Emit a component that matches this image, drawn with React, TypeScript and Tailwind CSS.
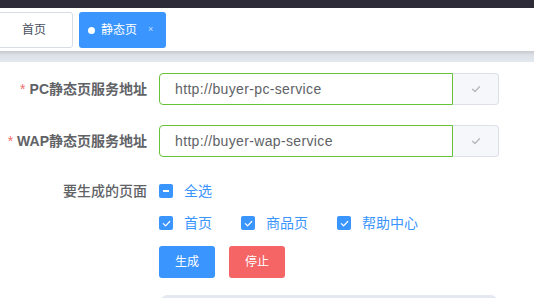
import React from "react";

const font = { fontFamily: '"Liberation Sans", "Noto Sans CJK SC", sans-serif' };

function Check({ className = "" }: { className?: string }) {
  return (
    <svg viewBox="0 0 12 12" className={className} fill="none">
      <path d="M2.5 6.2 L5 8.5 L9.5 3.8" stroke="currentColor" strokeWidth="1.3" strokeLinecap="round" strokeLinejoin="round" />
    </svg>
  );
}

function Box({ indeterminate = false }: { indeterminate?: boolean }) {
  return (
    <span className="w-[14px] h-[14px] rounded-[2px] bg-[#3a95ff] flex items-center justify-center shrink-0">
      {indeterminate ? (
        <span className="w-[6px] h-[2px] bg-white" />
      ) : (
        <Check className="w-[11px] h-[11px] text-white" />
      )}
    </span>
  );
}

function CheckItem({ label, indeterminate = false, last = false }: { label: string; indeterminate?: boolean; last?: boolean }) {
  return (
    <label className={`flex items-center ${last ? "" : "mr-[29px]"}`}>
      <Box indeterminate={indeterminate} />
      <span className="pl-[11px] text-[14px] text-[#3a95ff]">{label}</span>
    </label>
  );
}

function Row({ label, value }: { label: React.ReactNode; value: string }) {
  return (
    <div className="flex items-center h-[32px]">
      <div className="w-[159px] pr-[12px] text-right text-[14px] font-bold text-[#606266]">{label}</div>
      <div className="flex h-[32px]">
        <div className="w-[294px] h-[32px] border border-[#67c23a] rounded-l-[4px] flex items-center pl-[15px] text-[14px] tracking-[0.35px] text-[#606266]">
          {value}
        </div>
        <div className="w-[46px] h-[32px] bg-[#f5f7fa] border border-l-0 border-[#dcdfe6] rounded-r-[4px] flex items-center justify-center">
          <Check className="w-[12px] h-[12px] text-[#b4b7bd]" />
        </div>
      </div>
    </div>
  );
}

export default function App() {
  return (
    <div className="w-[534px] h-[298px] overflow-hidden bg-white" style={font}>
      <div className="h-[8px] bg-[#2e2b38]" />
      <div className="h-[43px] bg-white flex items-start pt-[4px] overflow-hidden">
        <div className="-ml-[8px] w-[81px] h-[36px] border border-[#d8dce5] rounded-[3px] bg-white flex items-center justify-center pl-[3px] text-[12px] text-[#495060]">
          首页
        </div>
        <div className="ml-[6px] w-[87px] h-[36px] rounded-[3px] bg-[#3a95ff] flex items-center pl-[9px] text-[12px] text-white">
          <span className="w-[7px] h-[7px] rounded-full bg-white mr-[6px]" />
          <span>静态页</span>
          <span className="ml-[11px] text-[9px] text-white/70">×</span>
        </div>
      </div>
      <div className="h-[11px] bg-[linear-gradient(#c6c9ce,#dce0e6_35%,#e4e8f0)]" />
      <div className="pt-[11px] flex flex-col">
        <Row
          label={
            <>
              <span className="text-[#f56c6c] mr-[4px] font-normal">*</span>PC静态页服务地址
            </>
          }
          value="http://buyer-pc-service"
        />
        <div className="h-[20px]" />
        <Row
          label={
            <>
              <span className="text-[#f56c6c] mr-[4px] font-normal">*</span>WAP静态页服务地址
            </>
          }
          value="http://buyer-wap-service"
        />
        <div className="h-[18px]" />
        <div className="flex">
          <div className="w-[159px] pr-[12px] text-right text-[14px] font-medium text-[#606266] leading-[32px] h-[32px]">
            要生成的页面
          </div>
          <div className="flex flex-col">
            <div className="h-[32px] flex items-center">
              <CheckItem label="全选" indeterminate last />
            </div>
            <div className="h-[32px] flex items-center">
              <CheckItem label="首页" />
              <CheckItem label="商品页" />
              <CheckItem label="帮助中心" last />
            </div>
            <div className="mt-[7px] flex gap-[14px]">
              <button className="w-[56px] h-[32px] rounded-[3px] bg-[#3a95ff] text-white text-[12px]">生成</button>
              <button className="w-[56px] h-[32px] rounded-[3px] bg-[#f56565] text-white text-[12px]">停止</button>
            </div>
            <div className="mt-[17px] ml-[2px] w-[336px] h-[20px] rounded-t-[6px] bg-[#e4e8f1]" />
          </div>
        </div>
      </div>
    </div>
  );
}
